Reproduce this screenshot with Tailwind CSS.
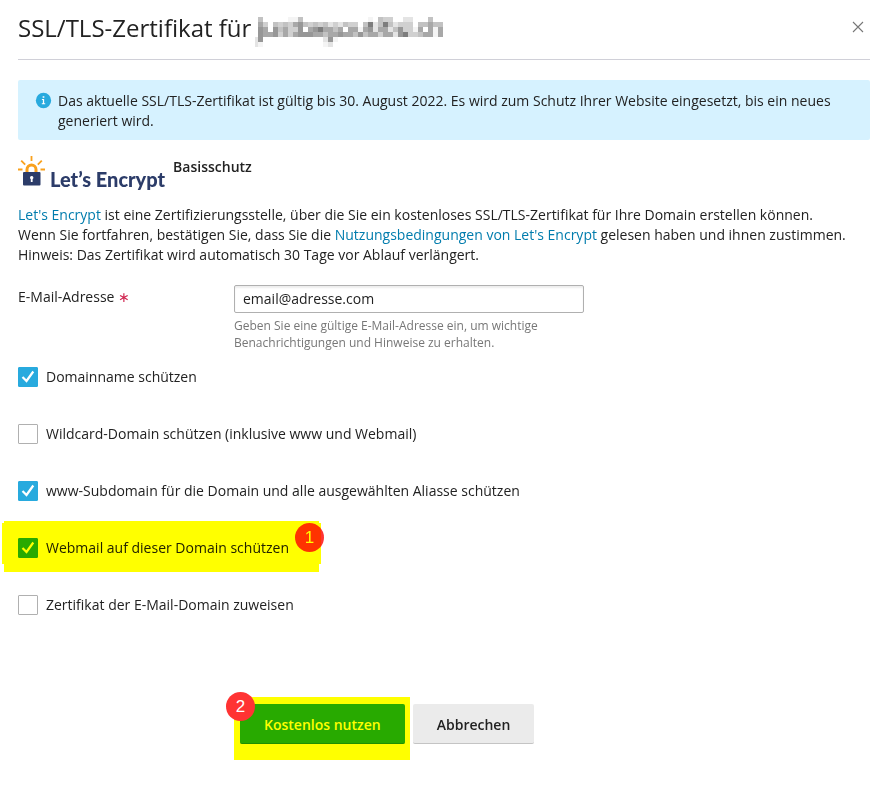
<!DOCTYPE html>
<html lang="de">
  <head>
    <meta charset="UTF-8" />
    <meta name="viewport" content="width=device-width, initial-scale=1.0" />
    <script src="https://cdn.jsdelivr.net/npm/@tailwindcss/browser@4"></script>
    <title>SSL/TLS-Zertifikat</title>
  </head>
  <body
    class="min-h-screen bg-white pl-[18px] pr-4 font-['Open_Sans',sans-serif] text-sm leading-5 text-[#222]"
  >
    <header
      class="flex h-15 items-center justify-between border-b border-[#d0d0d8] pb-1"
    >
      <h1 class="flex items-center gap-1 text-2xl">
        SSL/TLS-Zertifikat für
        <svg
          id="mosaic"
          class="mt-2 h-[30px] w-[188px]"
          viewBox="2 0 188 30"
          shape-rendering="crispEdges"
          role="img"
          aria-label="Domain unkenntlich"
        ></svg>
      </h1>
      <button type="button" aria-label="Schließen" class="p-1">
        <svg
          class="size-4"
          viewBox="0 0 16 16"
          fill="none"
          stroke="#777"
          stroke-width="1.1"
        >
          <path d="M3 2l10 10M13 2L3 12" />
        </svg>
      </button>
    </header>

    <main>
      <div
        class="mt-5 flex gap-[6px] rounded-xs bg-[#d6f2ff] pt-[11px] pr-6 pb-[9px] pl-[17px]"
      >
        <svg class="mt-px size-[17px] shrink-0" viewBox="0 0 16 16">
          <circle cx="8" cy="8" r="7.2" fill="#28aade" />
          <path
            d="M7.2 4h1.6v1.3H7.2zM6.5 6.7h2.1v4h1v.8H6.4v-.8h1V7.5h-.9z"
            fill="#fff"
          />
        </svg>
        <p>
          Das aktuelle SSL/TLS-Zertifikat ist gültig bis 30. August 2022. Es
          wird zum Schutz Ihrer Website eingesetzt, bis ein neues generiert
          wird.
        </p>
      </div>

      <section class="mt-4 flex gap-2">
        <div class="flex h-9 gap-1">
          <svg class="h-8 w-7" viewBox="0 0 28 32" fill="none">
            <g stroke="#f9a11d" stroke-width="1.8">
              <path
                d="M0 13.5h4.5M22.5 13.5H27M3.2 4.6l4 4M13.5 0v5M23.8 4.6l-4 4"
              />
              <path
                d="M9 17v-3.5a4.5 4.5 0 0 1 9 0V17"
                stroke-width="3"
              />
            </g>
            <rect x="5" y="16" width="17.5" height="13.5" rx="1" fill="#2c3c69" />
            <path
              d="M13.7 20a1.8 1.8 0 0 1 .9 3.3V26h-1.8v-2.7a1.8 1.8 0 0 1 .9-3.3z"
              fill="#fff"
            />
          </svg>
          <span
            class="mt-[11px] font-['Lato',sans-serif] text-xl leading-6 font-black whitespace-nowrap text-[#2c3c69]"
            >Let’s Encrypt</span
          >
        </div>
        <h2 class="pt-px font-semibold">Basisschutz</h2>
      </section>

      <p class="mt-[13px]">
        <a href="#" class="text-[#007cad]">Let's Encrypt</a> ist eine
        Zertifizierungsstelle, über die Sie ein kostenloses
        SSL/TLS-Zertifikat für Ihre Domain erstellen können.<br />
        Wenn Sie fortfahren, bestätigen Sie, dass Sie die
        <a href="#" class="text-[#007cad]"
          >Nutzungsbedingungen von Let's Encrypt</a
        >
        gelesen haben und ihnen zustimmen.<br />
        Hinweis: Das Zertifikat wird automatisch 30 Tage vor Ablauf verlängert.
      </p>

      <form onsubmit="return false">
        <div class="mt-5 flex">
          <label for="email" class="w-54 shrink-0 pt-[2px]"
            >E-Mail-Adresse <span class="text-[#d0244f]">∗</span></label
          >
          <div class="w-[350px]">
            <input
              id="email"
              type="email"
              value="email@adresse.com"
              aria-describedby="email-hint"
              class="block h-7 w-full rounded-xs border border-[#b0b0b0] bg-white px-2 pb-[2px] shadow-[inset_0_2px_2px_#eee]"
            />
            <p id="email-hint" class="mt-1 text-xs leading-[17px] text-[#777]">
              Geben Sie eine gültige E-Mail-Adresse ein, um wichtige
              Benachrichtigungen und Hinweise zu erhalten.
            </p>
          </div>
        </div>

        <div class="mt-4 flex flex-col items-start gap-[37px]">
          <label class="flex gap-2">
            <span class="grid size-5">
              <input
                type="checkbox"
                checked
                class="peer col-start-1 row-start-1 size-5 appearance-none rounded-[1px] border border-[#b0b0b0] bg-white checked:border-[#28aade] checked:bg-[#28aade]"
              />
              <svg
                class="pointer-events-none invisible col-start-1 row-start-1 size-5 peer-checked:visible"
                viewBox="0 0 20 20"
                fill="none"
                stroke="#fff"
                stroke-width="2.2"
              >
                <path d="M4.5 10l4 4L15.3 4.5" />
              </svg>
            </span>
            Domainname schützen
          </label>
          <label class="flex gap-2">
            <span class="grid size-5">
              <input
                type="checkbox"
                class="peer col-start-1 row-start-1 size-5 appearance-none rounded-[1px] border border-[#b0b0b0] bg-white checked:border-[#28aade] checked:bg-[#28aade]"
              />
              <svg
                class="pointer-events-none invisible col-start-1 row-start-1 size-5 peer-checked:visible"
                viewBox="0 0 20 20"
                fill="none"
                stroke="#fff"
                stroke-width="2.2"
              >
                <path d="M4.5 10l4 4L15.3 4.5" />
              </svg>
            </span>
            Wildcard-Domain schützen (inklusive www und Webmail)
          </label>
          <label class="flex gap-2">
            <span class="grid size-5">
              <input
                type="checkbox"
                checked
                class="peer col-start-1 row-start-1 size-5 appearance-none rounded-[1px] border border-[#b0b0b0] bg-white checked:border-[#28aade] checked:bg-[#28aade]"
              />
              <svg
                class="pointer-events-none invisible col-start-1 row-start-1 size-5 peer-checked:visible"
                viewBox="0 0 20 20"
                fill="none"
                stroke="#fff"
                stroke-width="2.2"
              >
                <path d="M4.5 10l4 4L15.3 4.5" />
              </svg>
            </span>
            www-Subdomain für die Domain und alle ausgewählten Aliasse schützen
          </label>
          <div class="relative">
            <label class="flex gap-2">
              <span class="grid size-5">
                <input
                  type="checkbox"
                  checked
                  class="peer col-start-1 row-start-1 size-5 appearance-none rounded-[1px] border border-[#b0b0b0] bg-white checked:border-[#28aade] checked:bg-[#28aade]"
                />
                <svg
                  class="pointer-events-none invisible col-start-1 row-start-1 size-5 peer-checked:visible"
                  viewBox="0 0 20 20"
                  fill="none"
                  stroke="#fff"
                  stroke-width="2.2"
                >
                  <path d="M4.5 10l4 4L15.3 4.5" />
                </svg>
              </span>
              Webmail auf dieser Domain schützen
            </label>
            <span
              class="absolute -top-[15px] left-[277px] flex size-[29px] items-center justify-center rounded-full bg-[#ff3333] font-['Liberation_Sans',sans-serif] text-[17px] text-white"
              >1</span
            >
            <!-- marker pen -->
            <svg
              class="pointer-events-none absolute -top-[17px] -left-4 h-[51px] w-[319px] mix-blend-multiply"
              viewBox="0 0 319 51"
              shape-rendering="crispEdges"
            >
              <path
                d="M2 0h315v2h2v41h-2v8H2v-8H0V2h2z"
                fill="#ffff00"
              />
            </svg>
          </div>
          <label class="flex gap-2">
            <span class="grid size-5">
              <input
                type="checkbox"
                class="peer col-start-1 row-start-1 size-5 appearance-none rounded-[1px] border border-[#b0b0b0] bg-white checked:border-[#28aade] checked:bg-[#28aade]"
              />
              <svg
                class="pointer-events-none invisible col-start-1 row-start-1 size-5 peer-checked:visible"
                viewBox="0 0 20 20"
                fill="none"
                stroke="#fff"
                stroke-width="2.2"
              >
                <path d="M4.5 10l4 4L15.3 4.5" />
              </svg>
            </span>
            Zertifikat der E-Mail-Domain zuweisen
          </label>
        </div>

        <div class="mt-[89px] flex gap-2 pl-[222px]">
          <div class="relative">
            <button
              type="submit"
              class="h-10 rounded-xs border-b border-[#1f8fc0] bg-[#28aade] px-6 pt-[2px] font-semibold text-white"
            >
              Kostenlos nutzen
            </button>
            <div
              class="pointer-events-none absolute -top-[7px] -right-[5px] -bottom-4 -left-[6px] bg-[#ffff00] mix-blend-multiply"
            ></div>
            <span
              class="absolute -top-3 -left-[14px] flex size-[29px] items-center justify-center rounded-full bg-[#ff3333] font-['Liberation_Sans',sans-serif] text-[17px] text-white"
              >2</span
            >
          </div>
          <button
            type="button"
            class="h-10 rounded-xs border-b border-[#c4c4c4] bg-[#ebebeb] px-6 pt-[2px] font-semibold"
          >
            Abbrechen
          </button>
        </div>
      </form>
    </main>

    <script>
      // one letter per 5px cell, a is the lightest grey
      const shades = {
        a: "#f4f4f4",
        b: "#e4e4e4",
        c: "#d0d0d0",
        d: "#c2c2c2",
        e: "#a8a8a8",
        f: "#979797",
        g: "#7d7d7d",
      };
      const rows = [
        ".d.....aad.............a.dcc..bb...d..",
        ".ec.dcdcefdcdcdbcbdcc.dgbdgdbccc.ddedd",
        ".fe.fdeccf.efgeede.eeaefbeebdfccae.eae",
        ".feefcecefffeedeefeedfdeeceebfgccdeeae",
        "bf............bfa.....................",
        "ba............ab......................",
      ];

      const mosaic = document.getElementById("mosaic");
      rows.forEach((row, y) => {
        [...row].forEach((cell, x) => {
          if (!shades[cell]) return;
          const rect = document.createElementNS(
            "http://www.w3.org/2000/svg",
            "rect"
          );
          rect.setAttribute("x", x * 5);
          rect.setAttribute("y", y * 5);
          rect.setAttribute("width", 5);
          rect.setAttribute("height", 5);
          rect.setAttribute("fill", shades[cell]);
          mosaic.appendChild(rect);
        });
      });
    </script>
  </body>
</html>
